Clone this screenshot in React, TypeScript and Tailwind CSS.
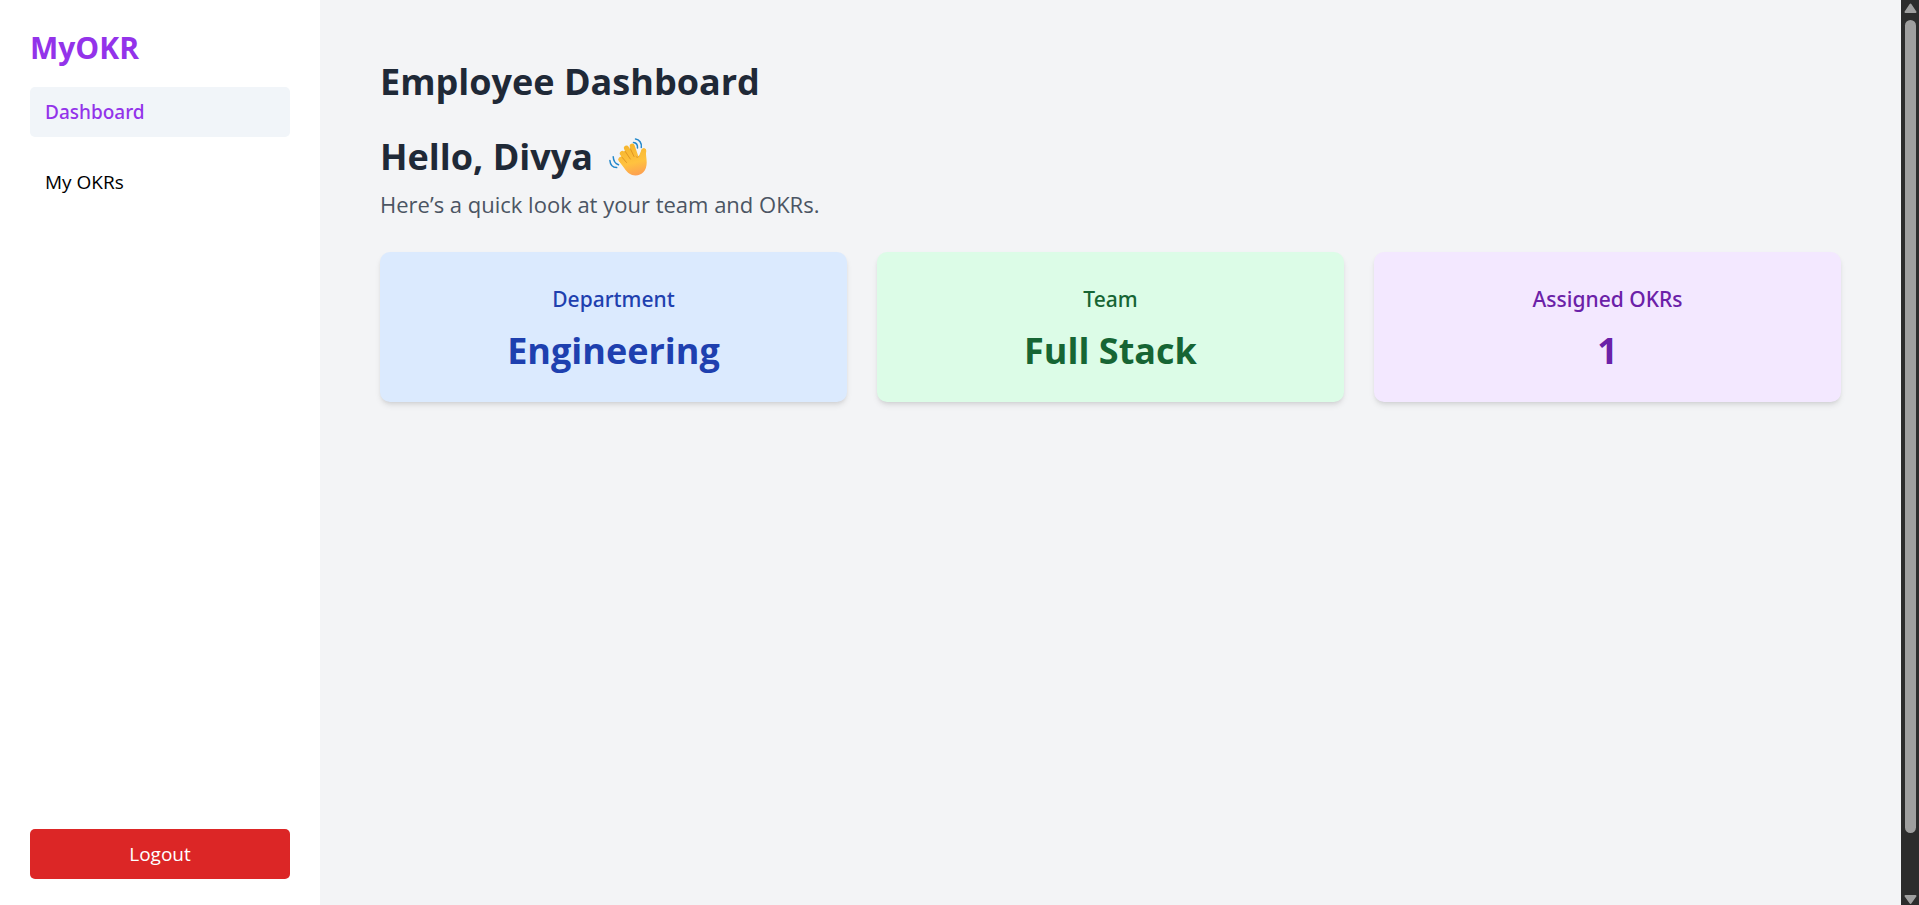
import React from "react";

const links = [
  { label: "Dashboard", href: "#dashboard", active: true },
  { label: "My OKRs", href: "#okrs", active: false },
];

const cards = [
  { label: "Department", value: "Engineering", tone: "bg-[#dbeafe] text-[#1e40af]" },
  { label: "Team", value: "Full Stack", tone: "bg-[#dcfce7] text-[#166534]" },
  { label: "Assigned OKRs", value: "1", tone: "bg-[#f3e8ff] text-[#6b21a8]" },
];

function WavingHand() {
  return (
    <svg viewBox="0 0 38 38" className="size-[38px]" role="img" aria-label="Waving hand">
      <defs>
        <linearGradient id="skin" gradientUnits="userSpaceOnUse" x1="18" y1="6" x2="26" y2="38">
          <stop offset="0" stopColor="#f5b52c" />
          <stop offset="0.6" stopColor="#ffc23f" />
          <stop offset="1" stopColor="#fd9f52" />
        </linearGradient>
      </defs>
      <g fill="none" stroke="url(#skin)" strokeLinecap="round" strokeWidth="5">
        <path d="M11.7 21.5 20 30" />
        <path d="M13.3 15.500 22 27" />
        <path d="M17.4 10 25 25" />
        <path d="M23.2 8 28 22" />
        <path d="M34.7 13 33.5 24" />
      </g>
      <path
        d="M10.300 23.500 13 16l5-6 5.500 2L27 18.500c.8 1.500 2.500 1 3-.5L32.400 12c1.500-3 5.200-1.500 4.700 1.500-.5 3 .6 6.500.6 11C37.700 32.500 33 37.500 26.500 37.500c-5 0-8.200-3-11-7z"
        fill="url(#skin)"
      />
      <g fill="none" stroke="#d98a1c" strokeLinecap="round" strokeWidth="1" opacity="0.75">
        <path d="m13.300 19.500 4.200 5" />
        <path d="m16.300 13.500 5 7.500" />
        <path d="m21 10 4 8.500" />
        <path d="M27 18.500c1 1.400 2.500 1 3-.5" />
      </g>
      <g fill="none" stroke="#2488cb" strokeLinecap="round" strokeWidth="1.500">
        <path d="M26.500 1c3.800.4 6.500 4 5.800 8.500" />
        <path d="M24.500 4.500c2.700.3 4.200 2.500 4 5.500" />
        <path d="M.9 22.500c.3 3.900 2.700 6.900 6.800 7.100" />
        <path d="M4.200 18.800c.3 4.300 2.300 7 5.300 8" />
      </g>
    </svg>
  );
}

function ScrollRail() {
  return (
    <div aria-hidden="true" className="flex w-[18px] shrink-0 flex-col items-center bg-[#2c2c2c]">
      <svg viewBox="0 0 18 20" className="h-5 w-[18px] shrink-0">
        <path d="M9.500 4.500 14.500 12h-10z" fill="#9f9f9f" stroke="#9f9f9f" strokeWidth="2" strokeLinejoin="round" />
      </svg>
      <div className="ml-px w-[11px] flex-[813_1_0%] rounded-full bg-[#9f9f9f]" />
      <div className="flex-[60_1_0%]" />
      <svg viewBox="0 0 18 12" className="h-3 w-[18px] shrink-0">
        <path d="M9.500 10 14.500 3h-10z" fill="#9f9f9f" stroke="#9f9f9f" strokeWidth="2" strokeLinejoin="round" />
      </svg>
    </div>
  );
}

export default function App() {
  return (
    <div className="flex min-h-screen bg-[#f3f4f6] font-['Open_Sans',sans-serif] text-[19px] leading-[30px] text-black">
      <aside className="flex w-[320px] shrink-0 flex-col justify-between bg-white px-[30px] pt-[30px] pb-[26px]">
        <div>
          <h2 className="text-[30px] leading-[35px] font-bold text-[#9333ea]">MyOKR</h2>
          <nav className="mt-[22px] flex flex-col gap-5">
            {links.map((link) => (
              <a
                key={link.label}
                href={link.href}
                className={
                  link.active
                    ? "rounded-[5px] bg-[#f1f5f9] px-[15px] py-[10px] font-['Noto_Sans',sans-serif] font-medium text-[#9333ea]"
                    : "rounded-[5px] px-[15px] py-[10px]"
                }
              >
                {link.label}
              </a>
            ))}
          </nav>
        </div>
        <button type="button" className="w-full rounded-[5px] bg-[#dc2626] px-5 py-[10px] text-white">
          Logout
        </button>
      </aside>

      <main className="min-w-0 flex-1 px-[60px] pt-[59px] pb-[60px]">
        <h1 className="text-[36px] leading-[45px] font-bold text-[#1f2937]">Employee Dashboard</h1>
        <h2 className="mt-[30px] flex items-center gap-4 text-[36px] leading-[45px] font-bold text-[#1f2937]">
          Hello, Divya <WavingHand />
        </h2>
        <p className="mt-2 text-[22px] leading-[34px] text-[#4b5563]">
          Here’s a quick look at your team and OKRs.
        </p>
        <section className="mt-[31px] grid grid-cols-3 gap-[30px]">
          {cards.map((card) => (
            <div key={card.label} className={`rounded-[10px] px-[30px] pt-[30px] pb-[29px] text-center shadow-md ${card.tone}`}>
              <h3 className="font-['Noto_Sans',sans-serif] text-[21px] leading-[34px] font-medium">{card.label}</h3>
              <p className="mt-3 text-[36px] leading-[45px] font-bold">{card.value}</p>
            </div>
          ))}
        </section>
      </main>
      <ScrollRail />
    </div>
  );
}
